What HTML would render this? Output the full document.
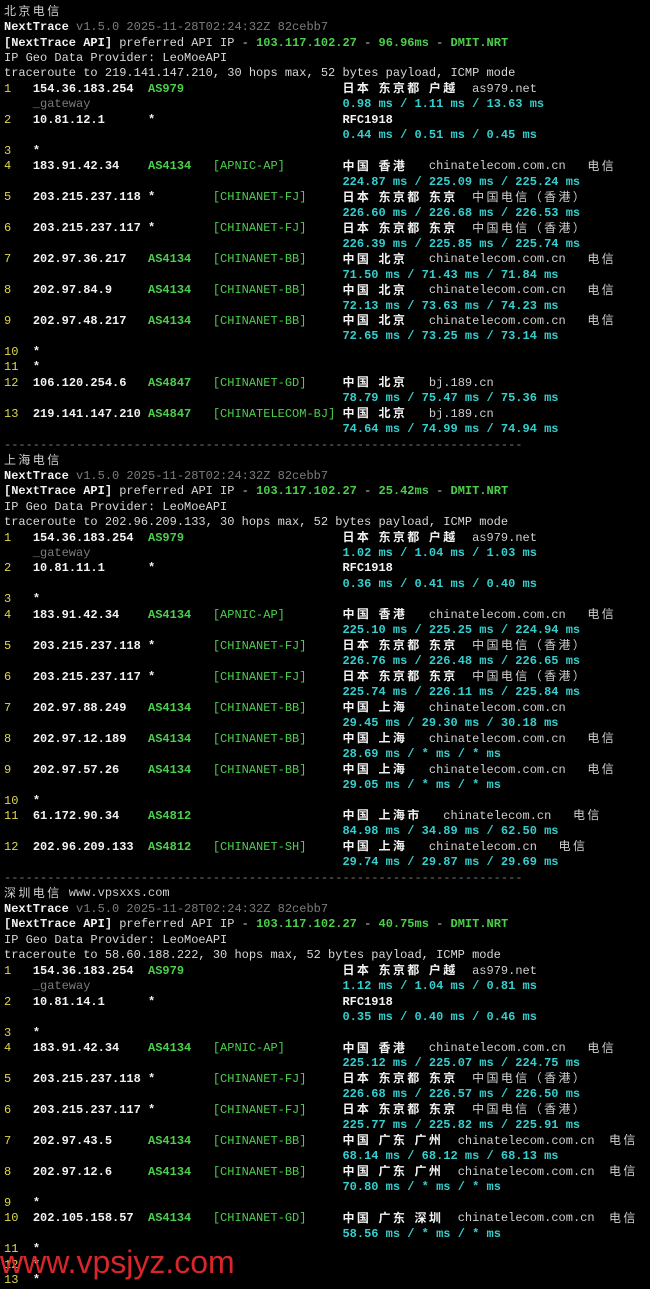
<!DOCTYPE html>
<html><head><meta charset="utf-8"><style>
html,body{margin:0;padding:0;background:#000;width:650px;height:1280px;overflow:hidden}
#t{position:absolute;left:4px;top:4.6px;font-family:"Liberation Mono",monospace;font-size:12px;color:#d8d8d8}
.l{height:15.48px;line-height:15.48px;white-space:pre;overflow:hidden}
.k{letter-spacing:2.4px;font-family:"Noto Sans CJK SC","WenQuanYi Zen Hei",sans-serif;line-height:15.48px;vertical-align:top;position:relative;top:-1.5px}
.w{color:#f2f2f2;font-weight:bold}
.y{color:#e0d84a}
.g{color:#4ccf4c;font-weight:bold}
.gn{color:#4ccf4c}
.c{color:#36cfcf;font-weight:bold}
.d{color:#7c7c7c}
.n{color:#cfcfcf}
#wm{position:absolute;left:0;top:1244px;font-family:"Liberation Sans",sans-serif;font-size:32px;color:#d8262a;letter-spacing:0}
</style></head><body><div id="t">
<div class="l n"><span class="k">北京电信</span></div>
<div class="l"><span class="w">NextTrace</span> <span class="d">v1.5.0 2025-11-28T02:24:32Z 82cebb7</span></div>
<div class="l"><span class="w">[NextTrace API]</span> preferred API IP - <span class="g">103.117.102.27</span> - <span class="g">96.96ms</span> - <span class="g">DMIT.NRT</span></div>
<div class="l">IP Geo Data Provider: LeoMoeAPI</div>
<div class="l">traceroute to 219.141.147.210, 30 hops max, 52 bytes payload, ICMP mode</div>
<div class="l"><span class="y">1   </span><span class="w">154.36.183.254  </span><span class="g">AS979                      </span><span class="w k">日本</span> <span class="w k">东京都</span> <span class="w k">户越</span>  <span class="n">as979.net</span></div>
<div class="l"><span class="d">    _gateway                                   </span><span class="c">0.98 ms / 1.11 ms / 13.63 ms</span></div>
<div class="l"><span class="y">2   </span><span class="w">10.81.12.1      </span><span class="w">*                          RFC1918</span></div>
<div class="l">                                               <span class="c">0.44 ms / 0.51 ms / 0.45 ms</span></div>
<div class="l"><span class="y">3   </span><span class="w">*</span></div>
<div class="l"><span class="y">4   </span><span class="w">183.91.42.34    </span><span class="g">AS4134   </span><span class="gn">[APNIC-AP]        </span><span class="w k">中国</span> <span class="w k">香港</span>   <span class="n">chinatelecom.com.cn</span>   <span class="n k">电信</span></div>
<div class="l">                                               <span class="c">224.87 ms / 225.09 ms / 225.24 ms</span></div>
<div class="l"><span class="y">5   </span><span class="w">203.215.237.118 </span><span class="w">*        </span><span class="gn">[CHINANET-FJ]     </span><span class="w k">日本</span> <span class="w k">东京都</span> <span class="w k">东京</span>  <span class="n k">中国电信（香港）</span></div>
<div class="l">                                               <span class="c">226.60 ms / 226.68 ms / 226.53 ms</span></div>
<div class="l"><span class="y">6   </span><span class="w">203.215.237.117 </span><span class="w">*        </span><span class="gn">[CHINANET-FJ]     </span><span class="w k">日本</span> <span class="w k">东京都</span> <span class="w k">东京</span>  <span class="n k">中国电信（香港）</span></div>
<div class="l">                                               <span class="c">226.39 ms / 225.85 ms / 225.74 ms</span></div>
<div class="l"><span class="y">7   </span><span class="w">202.97.36.217   </span><span class="g">AS4134   </span><span class="gn">[CHINANET-BB]     </span><span class="w k">中国</span> <span class="w k">北京</span>   <span class="n">chinatelecom.com.cn</span>   <span class="n k">电信</span></div>
<div class="l">                                               <span class="c">71.50 ms / 71.43 ms / 71.84 ms</span></div>
<div class="l"><span class="y">8   </span><span class="w">202.97.84.9     </span><span class="g">AS4134   </span><span class="gn">[CHINANET-BB]     </span><span class="w k">中国</span> <span class="w k">北京</span>   <span class="n">chinatelecom.com.cn</span>   <span class="n k">电信</span></div>
<div class="l">                                               <span class="c">72.13 ms / 73.63 ms / 74.23 ms</span></div>
<div class="l"><span class="y">9   </span><span class="w">202.97.48.217   </span><span class="g">AS4134   </span><span class="gn">[CHINANET-BB]     </span><span class="w k">中国</span> <span class="w k">北京</span>   <span class="n">chinatelecom.com.cn</span>   <span class="n k">电信</span></div>
<div class="l">                                               <span class="c">72.65 ms / 73.25 ms / 73.14 ms</span></div>
<div class="l"><span class="y">10  </span><span class="w">*</span></div>
<div class="l"><span class="y">11  </span><span class="w">*</span></div>
<div class="l"><span class="y">12  </span><span class="w">106.120.254.6   </span><span class="g">AS4847   </span><span class="gn">[CHINANET-GD]     </span><span class="w k">中国</span> <span class="w k">北京</span>   <span class="n">bj.189.cn</span></div>
<div class="l">                                               <span class="c">78.79 ms / 75.47 ms / 75.36 ms</span></div>
<div class="l"><span class="y">13  </span><span class="w">219.141.147.210 </span><span class="g">AS4847   </span><span class="gn">[CHINATELECOM-BJ]</span> <span class="w k">中国</span> <span class="w k">北京</span>   <span class="n">bj.189.cn</span></div>
<div class="l">                                               <span class="c">74.64 ms / 74.99 ms / 74.94 ms</span></div>
<div class="l d">------------------------------------------------------------------------</div>
<div class="l n"><span class="k">上海电信</span></div>
<div class="l"><span class="w">NextTrace</span> <span class="d">v1.5.0 2025-11-28T02:24:32Z 82cebb7</span></div>
<div class="l"><span class="w">[NextTrace API]</span> preferred API IP - <span class="g">103.117.102.27</span> - <span class="g">25.42ms</span> - <span class="g">DMIT.NRT</span></div>
<div class="l">IP Geo Data Provider: LeoMoeAPI</div>
<div class="l">traceroute to 202.96.209.133, 30 hops max, 52 bytes payload, ICMP mode</div>
<div class="l"><span class="y">1   </span><span class="w">154.36.183.254  </span><span class="g">AS979                      </span><span class="w k">日本</span> <span class="w k">东京都</span> <span class="w k">户越</span>  <span class="n">as979.net</span></div>
<div class="l"><span class="d">    _gateway                                   </span><span class="c">1.02 ms / 1.04 ms / 1.03 ms</span></div>
<div class="l"><span class="y">2   </span><span class="w">10.81.11.1      </span><span class="w">*                          RFC1918</span></div>
<div class="l">                                               <span class="c">0.36 ms / 0.41 ms / 0.40 ms</span></div>
<div class="l"><span class="y">3   </span><span class="w">*</span></div>
<div class="l"><span class="y">4   </span><span class="w">183.91.42.34    </span><span class="g">AS4134   </span><span class="gn">[APNIC-AP]        </span><span class="w k">中国</span> <span class="w k">香港</span>   <span class="n">chinatelecom.com.cn</span>   <span class="n k">电信</span></div>
<div class="l">                                               <span class="c">225.10 ms / 225.25 ms / 224.94 ms</span></div>
<div class="l"><span class="y">5   </span><span class="w">203.215.237.118 </span><span class="w">*        </span><span class="gn">[CHINANET-FJ]     </span><span class="w k">日本</span> <span class="w k">东京都</span> <span class="w k">东京</span>  <span class="n k">中国电信（香港）</span></div>
<div class="l">                                               <span class="c">226.76 ms / 226.48 ms / 226.65 ms</span></div>
<div class="l"><span class="y">6   </span><span class="w">203.215.237.117 </span><span class="w">*        </span><span class="gn">[CHINANET-FJ]     </span><span class="w k">日本</span> <span class="w k">东京都</span> <span class="w k">东京</span>  <span class="n k">中国电信（香港）</span></div>
<div class="l">                                               <span class="c">225.74 ms / 226.11 ms / 225.84 ms</span></div>
<div class="l"><span class="y">7   </span><span class="w">202.97.88.249   </span><span class="g">AS4134   </span><span class="gn">[CHINANET-BB]     </span><span class="w k">中国</span> <span class="w k">上海</span>   <span class="n">chinatelecom.com.cn</span></div>
<div class="l">                                               <span class="c">29.45 ms / 29.30 ms / 30.18 ms</span></div>
<div class="l"><span class="y">8   </span><span class="w">202.97.12.189   </span><span class="g">AS4134   </span><span class="gn">[CHINANET-BB]     </span><span class="w k">中国</span> <span class="w k">上海</span>   <span class="n">chinatelecom.com.cn</span>   <span class="n k">电信</span></div>
<div class="l">                                               <span class="c">28.69 ms / * ms / * ms</span></div>
<div class="l"><span class="y">9   </span><span class="w">202.97.57.26    </span><span class="g">AS4134   </span><span class="gn">[CHINANET-BB]     </span><span class="w k">中国</span> <span class="w k">上海</span>   <span class="n">chinatelecom.com.cn</span>   <span class="n k">电信</span></div>
<div class="l">                                               <span class="c">29.05 ms / * ms / * ms</span></div>
<div class="l"><span class="y">10  </span><span class="w">*</span></div>
<div class="l"><span class="y">11  </span><span class="w">61.172.90.34    </span><span class="g">AS4812                     </span><span class="w k">中国</span> <span class="w k">上海市</span>   <span class="n">chinatelecom.cn</span>   <span class="n k">电信</span></div>
<div class="l">                                               <span class="c">84.98 ms / 34.89 ms / 62.50 ms</span></div>
<div class="l"><span class="y">12  </span><span class="w">202.96.209.133  </span><span class="g">AS4812   </span><span class="gn">[CHINANET-SH]     </span><span class="w k">中国</span> <span class="w k">上海</span>   <span class="n">chinatelecom.cn</span>   <span class="n k">电信</span></div>
<div class="l">                                               <span class="c">29.74 ms / 29.87 ms / 29.69 ms</span></div>
<div class="l d">------------------------------------------------------------------------</div>
<div class="l n"><span class="k">深圳电信</span> www.vpsxxs.com</div>
<div class="l"><span class="w">NextTrace</span> <span class="d">v1.5.0 2025-11-28T02:24:32Z 82cebb7</span></div>
<div class="l"><span class="w">[NextTrace API]</span> preferred API IP - <span class="g">103.117.102.27</span> - <span class="g">40.75ms</span> - <span class="g">DMIT.NRT</span></div>
<div class="l">IP Geo Data Provider: LeoMoeAPI</div>
<div class="l">traceroute to 58.60.188.222, 30 hops max, 52 bytes payload, ICMP mode</div>
<div class="l"><span class="y">1   </span><span class="w">154.36.183.254  </span><span class="g">AS979                      </span><span class="w k">日本</span> <span class="w k">东京都</span> <span class="w k">户越</span>  <span class="n">as979.net</span></div>
<div class="l"><span class="d">    _gateway                                   </span><span class="c">1.12 ms / 1.04 ms / 0.81 ms</span></div>
<div class="l"><span class="y">2   </span><span class="w">10.81.14.1      </span><span class="w">*                          RFC1918</span></div>
<div class="l">                                               <span class="c">0.35 ms / 0.40 ms / 0.46 ms</span></div>
<div class="l"><span class="y">3   </span><span class="w">*</span></div>
<div class="l"><span class="y">4   </span><span class="w">183.91.42.34    </span><span class="g">AS4134   </span><span class="gn">[APNIC-AP]        </span><span class="w k">中国</span> <span class="w k">香港</span>   <span class="n">chinatelecom.com.cn</span>   <span class="n k">电信</span></div>
<div class="l">                                               <span class="c">225.12 ms / 225.07 ms / 224.75 ms</span></div>
<div class="l"><span class="y">5   </span><span class="w">203.215.237.118 </span><span class="w">*        </span><span class="gn">[CHINANET-FJ]     </span><span class="w k">日本</span> <span class="w k">东京都</span> <span class="w k">东京</span>  <span class="n k">中国电信（香港）</span></div>
<div class="l">                                               <span class="c">226.68 ms / 226.57 ms / 226.50 ms</span></div>
<div class="l"><span class="y">6   </span><span class="w">203.215.237.117 </span><span class="w">*        </span><span class="gn">[CHINANET-FJ]     </span><span class="w k">日本</span> <span class="w k">东京都</span> <span class="w k">东京</span>  <span class="n k">中国电信（香港）</span></div>
<div class="l">                                               <span class="c">225.77 ms / 225.82 ms / 225.91 ms</span></div>
<div class="l"><span class="y">7   </span><span class="w">202.97.43.5     </span><span class="g">AS4134   </span><span class="gn">[CHINANET-BB]     </span><span class="w k">中国</span> <span class="w k">广东</span> <span class="w k">广州</span>  <span class="n">chinatelecom.com.cn</span>  <span class="n k">电信</span></div>
<div class="l">                                               <span class="c">68.14 ms / 68.12 ms / 68.13 ms</span></div>
<div class="l"><span class="y">8   </span><span class="w">202.97.12.6     </span><span class="g">AS4134   </span><span class="gn">[CHINANET-BB]     </span><span class="w k">中国</span> <span class="w k">广东</span> <span class="w k">广州</span>  <span class="n">chinatelecom.com.cn</span>  <span class="n k">电信</span></div>
<div class="l">                                               <span class="c">70.80 ms / * ms / * ms</span></div>
<div class="l"><span class="y">9   </span><span class="w">*</span></div>
<div class="l"><span class="y">10  </span><span class="w">202.105.158.57  </span><span class="g">AS4134   </span><span class="gn">[CHINANET-GD]     </span><span class="w k">中国</span> <span class="w k">广东</span> <span class="w k">深圳</span>  <span class="n">chinatelecom.com.cn</span>  <span class="n k">电信</span></div>
<div class="l">                                               <span class="c">58.56 ms / * ms / * ms</span></div>
<div class="l"><span class="y">11  </span><span class="w">*</span></div>
<div class="l"><span class="y">12  </span><span class="w">*</span></div>
<div class="l"><span class="y">13  </span><span class="w">*</span></div>
</div>
<div id="wm">www.vpsjyz.com</div>
</body></html>
